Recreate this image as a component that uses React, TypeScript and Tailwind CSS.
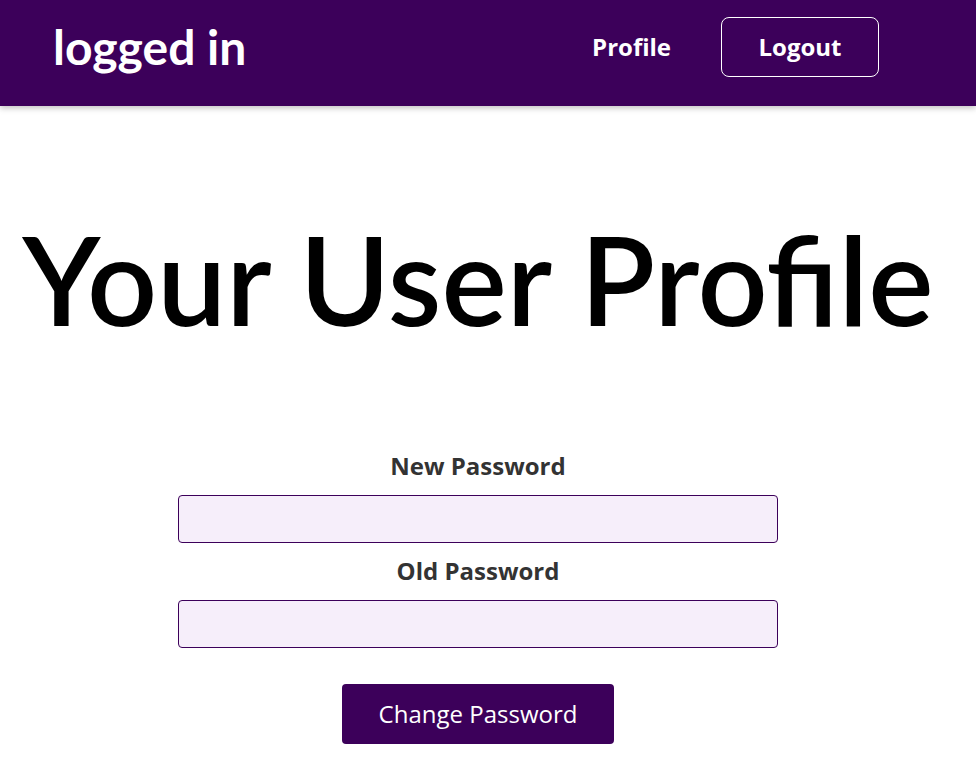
export default function App() {
  return (
    <div className="min-h-screen bg-white">
      {/* Top bar */}
      <header className="h-[106px] bg-[#3c005a] shadow-[0_2px_6px_rgba(0,0,0,0.25)] flex items-start justify-between pl-[53px] pr-[97px]">
        <h1 className="mt-[23px] font-['Lato',sans-serif] font-bold text-[48px] leading-none text-white">logged in</h1>
        <nav className="mt-[17px] flex items-center gap-[50px] font-['Open_Sans',sans-serif] font-bold text-[24px] text-white">
          <a href="#" className="leading-none">Profile</a>
          <button className="w-[158px] h-[60px] border border-white rounded-lg leading-none">Logout</button>
        </nav>
      </header>

      <main className="flex flex-col items-center pr-[20px]">
        <h2 className="mt-[111px] font-['Lato',sans-serif] font-semibold text-[123px] leading-none text-black">
          Your User Profile
        </h2>

        {/* Password form */}
        <form className="mt-[110px] flex flex-col items-center w-[600px] font-['Open_Sans',sans-serif]">
          <label className="font-bold text-[24px] leading-[32px] text-[#333]">New Password</label>
          <input type="password" className="mt-[13px] w-full h-[48px] bg-[#f6eefa] border border-[#3c005a] rounded-[4px]" />
          <label className="mt-[12px] font-bold text-[24px] leading-[32px] text-[#333]">Old Password</label>
          <input type="password" className="mt-[13px] w-full h-[48px] bg-[#f6eefa] border border-[#3c005a] rounded-[4px]" />
          <button type="button" className="mt-[36px] w-[272px] h-[60px] bg-[#3c005a] rounded-[4px] text-white text-[24px]">
            Change Password
          </button>
        </form>
      </main>
    </div>
  );
}
